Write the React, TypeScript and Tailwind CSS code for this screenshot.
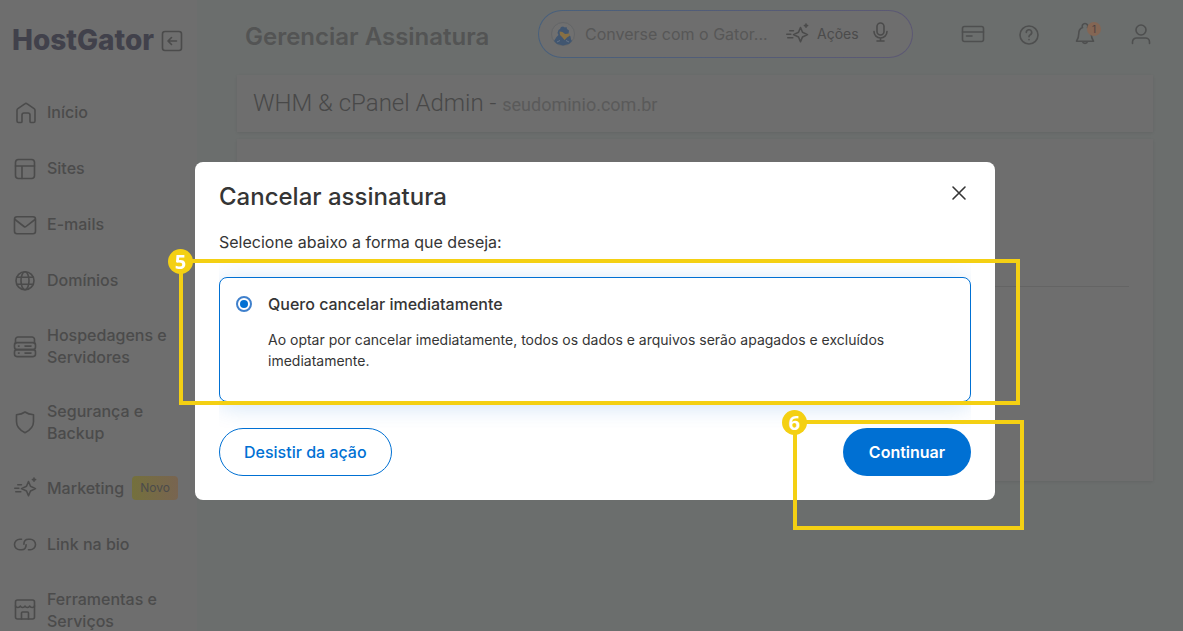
import type { ReactNode } from "react";

function Icon({ children }: { children: ReactNode }) {
  return (
    <svg
      viewBox="0 0 24 24"
      className="size-6 shrink-0"
      fill="none"
      stroke="currentColor"
      strokeWidth="1.6"
      strokeLinecap="round"
      strokeLinejoin="round"
      aria-hidden="true"
    >
      {children}
    </svg>
  );
}

const sparkle = (
  <>
    <path d="M15.5 5.5l2 4.7 5 2.4-5 2.4-2 4.7-2-4.7-5-2.4 5-2.4z" />
    <path d="M21 2v3.2M19.4 3.6h3.2M4.8 8.8h3.6M1.8 12.3h4M2.8 15.8h5" />
  </>
);

const icons: Record<string, ReactNode> = {
  home: (
    <path d="M4 10.4c0-.7.3-1.3.9-1.7l6.9-4.9a2 2 0 0 1 2.4 0l6.9 4.9c.6.4.9 1 .9 1.7V21a1.5 1.5 0 0 1-1.5 1.5h-2.4A1.1 1.1 0 0 1 17 21.4v-6.4a2 2 0 0 0-2-2h-4a2 2 0 0 0-2 2v6.4a1.1 1.1 0 0 1-1.1 1.1H5.5A1.5 1.5 0 0 1 4 21z" />
  ),
  sites: (
    <>
      <rect x="2.5" y="3.5" width="19" height="19" rx="3" />
      <path d="M2.5 10h19M9 10v12.5" />
    </>
  ),
  mail: (
    <>
      <rect x="1.5" y="4.7" width="21" height="17" rx="2.5" />
      <path d="M2 7.5l9 7a1.6 1.6 0 0 0 2 0l9-7" />
    </>
  ),
  globe: (
    <>
      <circle cx="12" cy="12.7" r="9" />
      <ellipse cx="12" cy="12.7" rx="4" ry="9" />
      <path d="M4 9.2h16M4 16.2h16" />
    </>
  ),
  server: (
    <>
      <path d="M2.5 9.5v-4a2.5 2.5 0 0 1 2.5-2.5h14a2.5 2.5 0 0 1 2.5 2.5v4" />
      <rect x="1.5" y="8.6" width="21" height="7" rx="2.5" />
      <rect x="1.5" y="15.6" width="21" height="7" rx="2.5" />
      <path d="M5.5 12.1h.6M12 12.1h6M5.5 19.1h.6M12 19.1h6" />
    </>
  ),
  shield: (
    <path d="M12 2c2.5 1.8 5.5 2.5 8.5 2.7v7c0 5-3.5 8.5-8.5 11-5-2.5-8.5-6-8.5-11v-7c3-.2 6-.9 8.5-2.7z" />
  ),
  sparkle,
  link: (
    <>
      <path d="M8.500 7.200H6.800a5.300 5.300 0 0 0 0 10.600H8.500c2.800 0 4.600-2 4.600-5" />
      <path d="M15.500 17.800h1.700a5.300 5.300 0 0 0 0-10.600H15.500c-2.800 0-4.600 2-4.600 5" />
    </>
  ),
  store: (
    <>
      <rect x="2.5" y="2" width="19" height="19" rx="2" />
      <path d="M2.5 8c.8 2 3.9 2 4.8 0 .9 2 3.8 2 4.7 0 .9 2 3.8 2 4.7 0 .9 2 4 2 4.8 0M8.5 21v-6a1 1 0 0 1 1-1h5a1 1 0 0 1 1 1v6" />
    </>
  ),
};

const menu = [
  { icon: "home", label: "Início" },
  { icon: "sites", label: "Sites" },
  { icon: "mail", label: "E-mails" },
  { icon: "globe", label: "Domínios" },
  { icon: "server", label: "Hospedagens e Servidores" },
  { icon: "shield", label: "Segurança e Backup" },
  { icon: "sparkle", label: "Marketing", badge: "Novo" },
  { icon: "link", label: "Link na bio" },
  { icon: "store", label: "Ferramentas e Serviços" },
];

function Sidebar() {
  return (
    <aside className="w-[197px] shrink-0 bg-[#6e6e6e] text-[#4b4b4b]">
      <div className="flex h-[84px] items-start gap-1.5 pt-6 pl-3">
        <span className="text-[28px] leading-8 font-extrabold text-[#41414b]">HostGator</span>
        <button type="button" aria-label="Recolher menu" className="pt-[5px]">
          <Icon>
            <rect x="2.5" y="2.5" width="19" height="19" rx="2.5" />
            <path d="M16.5 12h-8M11.5 8.5l-3.5 3.5 3.5 3.5" />
          </Icon>
        </button>
      </div>
      <nav>
        {menu.map((item) => (
          <a key={item.label} href="#" className="flex items-center gap-[10px] py-4 pl-[13px]">
            <Icon>{icons[item.icon]}</Icon>
            <span className="max-w-[130px] text-base leading-[22px] font-medium">{item.label}</span>
            {item.badge && (
              <span className="-ml-0.5 rounded-sm bg-linear-to-r from-[#74703c] to-[#786450] px-2 py-1 text-xs">
                {item.badge}
              </span>
            )}
          </a>
        ))}
      </nav>
    </aside>
  );
}

function Gator() {
  return (
    <svg viewBox="0 0 24 24" className="size-6 shrink-0" aria-hidden="true">
      <circle cx="12" cy="12" r="11.5" fill="#707070" stroke="#646668" />
      <path
        d="M7.5 8l1.500-1 1-2 2-.5 2 1 1.500-.5.500 2 2 1.500-.5 3 2 3 .5 3 1 1.500-3 3-6 1.500-6-1.500-3-3 2.500-4 2-2-1-2z"
        fill="#415670"
      />
      <path d="M8.500 9.500l3 .5 2.500 2 4-.5 1 2-3 2-2.500 2.500-2.500-3-2-2z" fill="#877044" />
      <path d="M6 20l3-1.500M18 20l-3-1.500" fill="none" stroke="#657488" />
    </svg>
  );
}

function Header() {
  return (
    <header className="flex h-[75px] items-start pr-[30px] pl-12">
      <h1 className="flex-1 pt-[21px] text-2xl leading-8 font-semibold whitespace-nowrap text-[#535454]">
        Gerenciar Assinatura
      </h1>
      <div className="mt-[10px] h-12 w-[375px] rounded-full bg-linear-to-r from-[#48607c] to-[#5c5873] p-px">
        <div className="flex h-full items-center rounded-full bg-[#6e6e6e] pl-3 text-[#4b4b4b]">
          <Gator />
          <input
            aria-label="Converse com o Gator"
            placeholder="Converse com o Gator..."
            className="ml-[10px] w-[192px] bg-transparent text-base outline-none placeholder:text-[#575757]"
          />
          <button type="button" className="ml-2 flex items-center gap-2 text-sm">
            <Icon>{sparkle}</Icon>
            Ações
          </button>
          <button type="button" aria-label="Falar" className="ml-[10px] pb-1">
            <Icon>
              <rect x="8" y="3" width="7" height="12" rx="3.5" />
              <path d="M5 11.5a6.5 6.5 0 0 0 13 0M11.5 18v3M8 21h7" />
            </Icon>
          </button>
        </div>
      </div>
      <div className="mt-[22px] ml-12 flex gap-8 text-[#4e4f4f]">
        <button type="button" aria-label="Pagamentos">
          <Icon>
            <rect x="1.5" y="4.5" width="21" height="15" rx="2" />
            <path d="M1.5 10h21M5.5 14h5.5" />
          </Icon>
        </button>
        <button type="button" aria-label="Ajuda">
          <Icon>
            <circle cx="12" cy="13" r="9" />
            <path d="M9.3 10.5a2.7 2.7 0 1 1 4 2.3c-.9.5-1.3 1-1.3 2M12 17.5v.2" />
          </Icon>
        </button>
        <button type="button" aria-label="Notificações" className="relative">
          <Icon>
            <path d="M9.5 5.5a2.8 2.8 0 1 1 5 0M9.5 5.5c-2.5 1-3.7 3-3.7 5.7 0 4-.8 5.8-2.3 8h17c-1.5-2.2-2.3-4-2.3-8 0-2.7-1.2-4.700-3.700-5.700M9.500 19.500a2.600 2.600 0 0 0 5 0" />
          </Icon>
          <span className="absolute top-0 left-[14px] size-[14px] rounded-full bg-[#846654] text-center text-[10px] leading-[14px] text-[#4a4040]">
            1
          </span>
        </button>
        <button type="button" aria-label="Conta">
          <Icon>
            <circle cx="12" cy="8" r="5" />
            <path d="M3.5 21.5v-1.5a4 4 0 0 1 4-4h9a4 4 0 0 1 4 4v1.5" />
          </Icon>
        </button>
      </div>
    </header>
  );
}

function Step({ n }: { n: number }) {
  return (
    <span className="absolute -top-[14px] -left-[15px] size-[25px] rounded-full bg-[#f4d013] text-center font-['Open_Sans',sans-serif] text-xl leading-[25px] font-bold text-white">
      {n}
    </span>
  );
}

function CancelDialog() {
  return (
    <div className="fixed inset-0 flex items-start justify-center pt-[162px] pl-[7px]">
      <div
        role="dialog"
        aria-labelledby="dialog-title"
        className="relative w-full max-w-[800px] rounded-lg bg-white px-6 pt-[19px] pb-6 text-[#353535]"
      >
        <div className="flex items-start justify-between">
          <h2 id="dialog-title" className="text-2xl leading-8 font-medium">
            Cancelar assinatura
          </h2>
          <button type="button" aria-label="Fechar">
            <Icon>
              <path d="M6 6l12 12M18 6L6 18" />
            </Icon>
          </button>
        </div>
        <p className="mt-[17px] text-base leading-6">Selecione abaixo a forma que deseja:</p>

        <div className="overflow-hidden pt-[23px] pb-[26px]">
          <div className="flex h-[125px] gap-4 rounded-lg border border-[#0070d3] bg-white px-4 pt-[15px] shadow-[0_4px_24px_rgba(0,112,211,0.2)]">
            <input
              id="cancel-now"
              type="radio"
              name="cancel"
              defaultChecked
              className="mt-[3px] size-4 shrink-0 appearance-none rounded-full border-2 border-[#3f80cc] bg-[#0070d3] bg-clip-content p-[2px]"
            />
            <div className="pr-12">
              <label htmlFor="cancel-now" className="block text-base leading-[22px] font-medium">
                Quero cancelar imediatamente
              </label>
              <p className="mt-[14px] text-sm leading-[21px]">
                Ao optar por cancelar imediatamente, todos os dados e arquivos serão apagados e excluídos
                imediatamente.
              </p>
            </div>
          </div>
        </div>

        <div className="flex justify-between">
          <button
            type="button"
            className="h-12 rounded-full border border-[#0070d3] px-6 font-medium text-[#0070d3]"
          >
            Desistir da ação
          </button>
          <button type="button" className="h-12 min-w-32 rounded-full bg-[#0070d3] px-6 font-semibold text-white">
            Continuar
          </button>
        </div>

        <div className="pointer-events-none absolute top-[97px] -right-[25px] -left-4 h-[146px] border-4 border-[#f4d013]">
          <Step n={5} />
        </div>
        <div className="pointer-events-none absolute top-[258px] -right-[29px] h-[110px] w-[231px] border-4 border-[#f4d013]">
          <Step n={6} />
        </div>
      </div>
    </div>
  );
}

export default function App() {
  return (
    <div className="flex h-screen overflow-hidden bg-[#6b6e6d] font-['Inter',sans-serif]">
      <Sidebar />
      <main className="min-w-0 flex-1">
        <Header />
        <div className="mr-[30px] ml-10 space-y-[7px] font-['Roboto',sans-serif]">
          <section className="h-[57px] bg-[#6e6e6e] px-4 shadow-[0_1px_3px_rgba(0,0,0,0.08)]">
            <h2 className="text-2xl leading-[57px] font-light text-[#484848]">
              WHM &amp; cPanel Admin - <span className="text-lg font-normal text-[#5a5a5a]">seudominio.com.br</span>
            </h2>
          </section>
          <section className="h-[342px] bg-[#6e6e6e] px-6 pt-[147px] shadow-[0_1px_3px_rgba(0,0,0,0.08)]">
            <hr className="border-[#646464]" />
          </section>
        </div>
      </main>
      <CancelDialog />
    </div>
  );
}
